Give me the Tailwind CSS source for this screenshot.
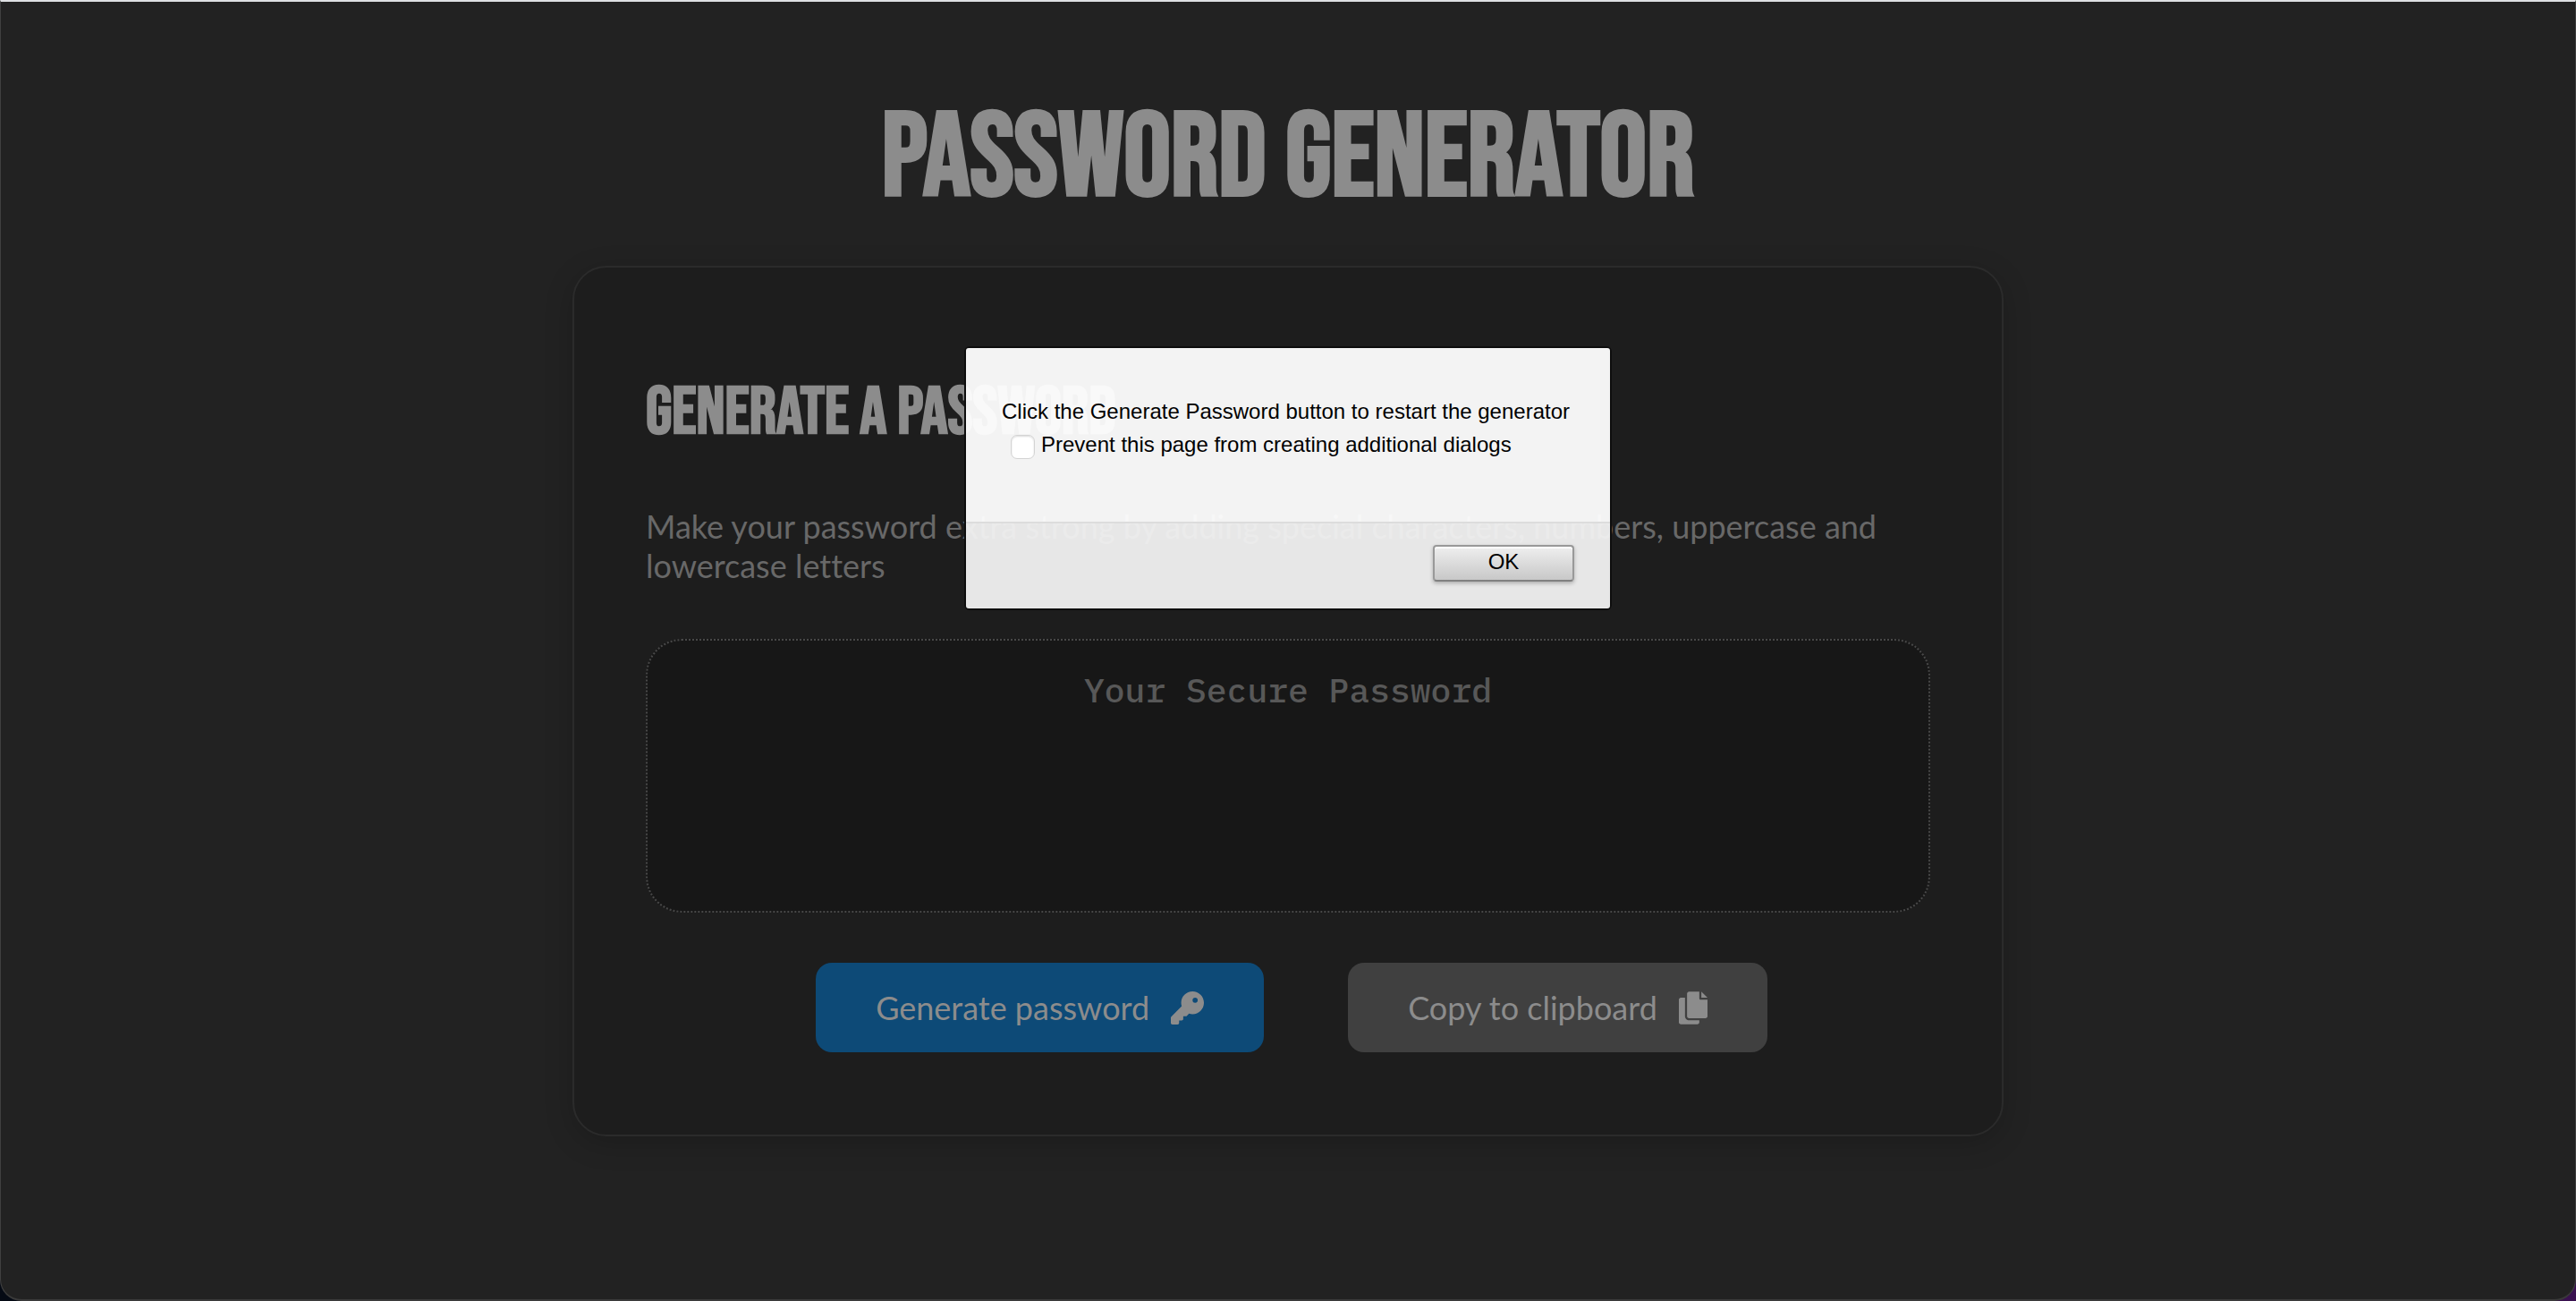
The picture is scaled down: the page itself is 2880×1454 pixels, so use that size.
<!DOCTYPE html>
<html lang="en">
<head>
<meta charset="utf-8">
<meta name="viewport" content="width=device-width, initial-scale=1">
<title>Password Generator</title>
<script src="https://cdn.jsdelivr.net/npm/@tailwindcss/browser@4"></script>
</head>
<body class="bg-gradient-to-r from-[#050a14] from-60% to-[#3a1150] font-['Lato',sans-serif] text-[#8c8c8c] [font-variant-ligatures:no-common-ligatures]">
<div class="relative flex min-h-screen flex-col items-center overflow-hidden rounded-b-[24px] border-x border-t-2 border-b-2 border-x-[#404040] border-t-[#dfe1e3] border-b-[#3a3a3a] bg-[#222222]">
  <h1 class="mt-[99px] font-['Bebas_Neue',sans-serif] text-[132px] leading-[156px] font-bold">Password Generator</h1>

  <main class="mt-[40px] w-full max-w-[1600px] rounded-[38px] border-2 border-[#2b2b2b] bg-[#1d1d1d] px-[80px] pt-[116px] pb-[92px] shadow-[0_8px_32px_rgba(0,0,0,0.18)]">
    <h2 class="font-['Bebas_Neue',sans-serif] text-[75px] leading-[94px] font-bold">Generate a Password</h2>
    <p class="mt-[57px] text-[36px] leading-[44px] text-[#686868]">Make your password extra strong by adding special characters, numbers, uppercase and lowercase letters</p>
    <textarea readonly aria-label="Your Secure Password" placeholder="Your Secure Password" class="mt-[60px] block h-[306px] w-full resize-none rounded-[40px] border-2 border-dotted border-[#484848] bg-[#171717] px-8 pt-[30px] text-center font-['IBM_Plex_Mono',monospace] text-[38px] leading-[50px] font-medium placeholder:text-[#585858]"></textarea>
    <div class="mt-[56px] flex justify-center gap-[94px] pl-[8px]">
      <button type="button" class="flex h-[100px] items-center gap-[24px] rounded-[18px] bg-[#0d4a77] px-[67px] text-[36px]">
        Generate password
        <svg class="size-[37px]" viewBox="0 0 512 512" fill="currentColor" aria-hidden="true"><path d="M336 352c97.200 0 176-78.800 176-176S433.200 0 336 0S160 78.800 160 176c0 18.700 2.900 36.800 8.300 53.700L7 391c-4.500 4.500-7 10.600-7 17v80c0 13.300 10.700 24 24 24h80c13.300 0 24-10.700 24-24V448h40c13.300 0 24-10.700 24-24V384h40c6.400 0 12.500-2.500 17-7l33.300-33.300c16.900 5.400 35 8.300 53.700 8.300zM376 96a40 40 0 1 1 0 80 40 40 0 1 1 0-80z"/></svg>
      </button>
      <button type="button" class="flex h-[100px] items-center gap-[24px] rounded-[18px] bg-[#404040] px-[67px] text-[36px]">
        Copy to clipboard
        <svg class="h-[37px] w-[32px]" viewBox="0 0 448 512" fill="currentColor" aria-hidden="true"><path d="M160 0C142.300 0 128 14.300 128 32V384c0 17.700 14.300 32 32 32H416c17.700 0 32-14.300 32-32V128H344c-13.250 0-24-10.750-24-24V0zM352 0l96 96h-96zM96 96H32C14.300 96 0 110.300 0 128V480c0 17.700 14.300 32 32 32H288c17.700 0 32-14.300 32-32V448H160c-35.300 0-64-28.700-64-64z"/></svg>
      </button>
    </div>
  </main>

  <div role="dialog" aria-modal="true" aria-labelledby="dialog-message" class="absolute top-[387px] left-1/2 flex h-[291px] w-[720px] -translate-x-1/2 flex-col rounded-[4px] font-['Liberation_Sans',sans-serif] text-[24px] leading-[37px] text-black shadow-[0_0_0_2px_#0d0d0d]">
    <div class="flex-1 rounded-t-[3px] bg-[#fffffff2] px-[40px] pt-[52px]">
      <p id="dialog-message" class="whitespace-nowrap">Click the Generate Password button to restart the generator</p>
      <label class="flex items-start gap-[7px] pl-[10px]">
        <input type="checkbox" class="mt-[8px] size-[27px] appearance-none rounded-[7px] border border-[#d4d4d4] bg-white shadow-[inset_0_1px_2px_rgba(0,0,0,0.15)]">
        Prevent this page from creating additional dialogs
      </label>
    </div>
    <div class="flex h-[97px] justify-end rounded-b-[3px] border-t-2 border-[#dcdcdc] bg-[#f2f2f2f2] px-[40px] pt-[24px]">
      <button type="button" class="h-[41px] w-[158px] rounded-[4px] border-2 border-[#999999] border-b-[#808080] bg-gradient-to-b from-[#efefef] to-[#c8c8c8] pb-[3px] leading-[34px] shadow-[inset_0_2px_0_#ffffff,0_2px_4px_rgba(0,0,0,0.25)]">OK</button>
    </div>
  </div>
</div>
</body>
</html>
